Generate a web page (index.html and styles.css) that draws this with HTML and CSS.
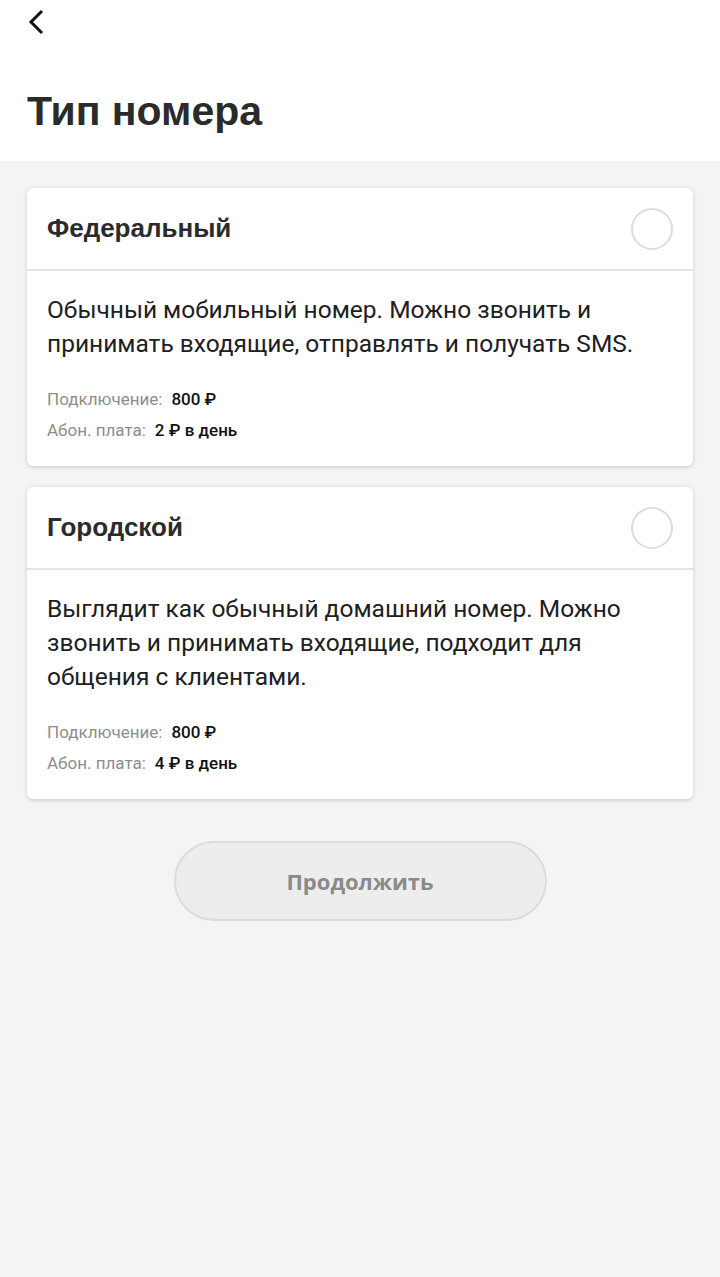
FILE: index.html
```html
<!DOCTYPE html>
<html lang="ru">
<head>
    <meta charset="UTF-8">
    <meta name="viewport" content="width=device-width, initial-scale=1">
    <title>Тип номера</title>
    <link rel="stylesheet" href="styles.css">
</head>
<body>
    <header class="top">
        <button class="back" aria-label="Назад">
            <svg width="20" height="26" viewBox="0 0 20 26">
                <path d="M15 2 L4 13 L15 24" fill="none" stroke="#111" stroke-width="3"/>
            </svg>
        </button>
        <h1 class="page-title">Тип номера</h1>
    </header>

    <main class="content">
        <div class="option-card">
            <div class="option-head">
                <h2 class="option-title">Федеральный</h2>
                <span class="radio"></span>
            </div>
            <div class="option-body">
                <p class="option-text">Обычный мобильный номер. Можно звонить и принимать входящие, отправлять и получать SMS.</p>
                <div class="price-row"><span class="price-label">Подключение:</span><span class="price-value">800 ₽</span></div>
                <div class="price-row"><span class="price-label">Абон. плата:</span><span class="price-value">2 ₽ в день</span></div>
            </div>
        </div>

        <div class="option-card">
            <div class="option-head">
                <h2 class="option-title">Городской</h2>
                <span class="radio"></span>
            </div>
            <div class="option-body">
                <p class="option-text">Выглядит как обычный домашний номер. Можно звонить и принимать входящие, подходит для общения с клиентами.</p>
                <div class="price-row"><span class="price-label">Подключение:</span><span class="price-value">800 ₽</span></div>
                <div class="price-row"><span class="price-label">Абон. плата:</span><span class="price-value">4 ₽ в день</span></div>
            </div>
        </div>

        <div class="actions">
            <button class="continue" disabled>Продолжить</button>
        </div>
    </main>
</body>
</html>
```

FILE: styles.css
```css
body {
    margin: 0;
    font-family: Roboto, "Liberation Sans", Arial, sans-serif;
    background-color: #f4f4f4;
    color: #1d2023;
    min-height: 100vh;
}
.top {
    background-color: #fff;
    height: 161px;
    padding: 9px 27px 0;
    box-sizing: border-box;
}
.back {
    background: none;
    border: none;
    padding: 0;
    display: block;
    height: 26px;
    cursor: pointer;
}
.page-title {
    margin: 52px 0 0;
    font-family: "Liberation Sans", Arial, sans-serif;
    font-size: 41px;
    line-height: 48px;
    font-weight: 700;
    color: #2b2b2b;
}
.content {
    padding: 27px 27px 0;
    display: flex;
    flex-direction: column;
    gap: 21px;
}
.option-card {
    background-color: #fff;
    border-radius: 6px;
    box-shadow: 0 1px 4px rgba(0,0,0,0.18);
}
.option-head {
    height: 81px;
    display: flex;
    align-items: center;
    justify-content: space-between;
    padding: 0 20px;
    border-bottom: 2px solid #e4e4e4;
}
.option-title {
    margin: 0;
    font-family: "Liberation Sans", Arial, sans-serif;
    font-size: 26px;
    font-weight: 700;
    color: #2b2b2b;
}
.radio {
    width: 38px;
    height: 38px;
    border: 2px solid #dcdcdc;
    border-radius: 50%;
}
.option-body {
    padding: 22px 20px 20px;
}
.option-text {
    margin: 0 0 23px;
    font-size: 24.5px;
    line-height: 34px;
    color: #1d2023;
}
.price-row {
    font-size: 17px;
    line-height: 31px;
}
.price-label {
    color: #8d8d8d;
    margin-right: 9px;
}
.price-value {
    color: #111;
    font-weight: 500;
}
.actions {
    display: flex;
    justify-content: center;
    padding-top: 21px;
}
.continue {
    width: 373px;
    height: 80px;
    border-radius: 40px;
    border: 2px solid #dcdcdc;
    background-color: #ededed;
    color: #8a8a8a;
    font-family: "Open Sans", Roboto, sans-serif;
    font-size: 22px;
    font-weight: 700;
}
```
